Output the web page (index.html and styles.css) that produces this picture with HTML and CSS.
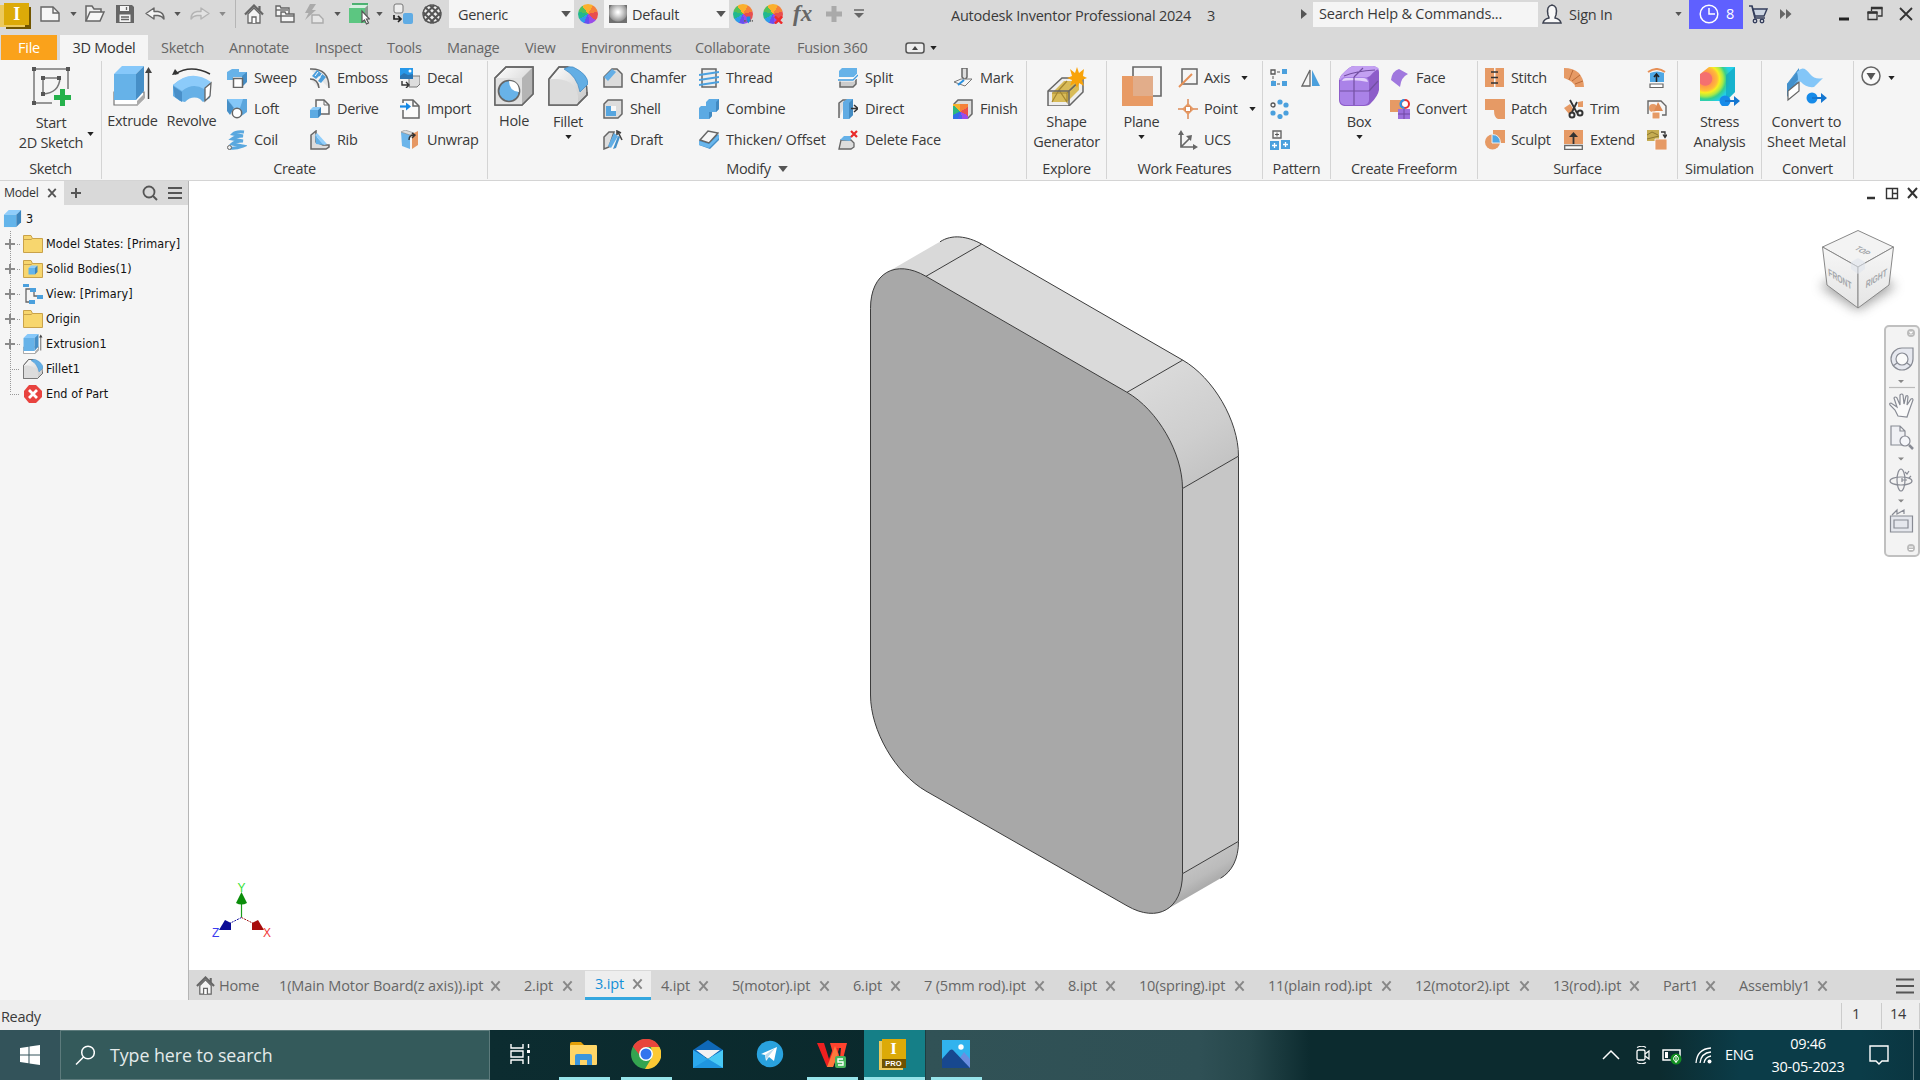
FILE: index.html
```html
<!DOCTYPE html>
<html lang="en">
<head>
<meta charset="utf-8">
<title>Autodesk Inventor Professional 2024</title>
<link rel="stylesheet" href="styles.css">
</head>
<body>
<svg class="defs" width="0" height="0">
  <defs>
    <linearGradient id="gBlue" x1="0" y1="0" x2="1" y2="1"><stop offset="0" stop-color="#74bdf0"/><stop offset="1" stop-color="#5aa5dc"/></linearGradient>
    <linearGradient id="gGrey" x1="0" y1="0" x2="1" y2="1"><stop offset="0" stop-color="#fff"/><stop offset="1" stop-color="#c4c4c4"/></linearGradient>
    <symbol id="down" viewBox="0 0 8 5"><path d="M0 0h8L4 5z"/></symbol>
    <symbol id="cross" viewBox="0 0 12 12"><path d="M1.500 1l9 10M10.500 1l-9 10" fill="none" stroke="currentColor" stroke-width="2.200"/></symbol>
    <symbol id="folder" viewBox="0 0 20 18"><path d="M.5 17.500V.5h7.500l1.500 3h10v14z" fill="#f7d66e" stroke="#c9a24a"/><path d="M.5 4.500h7.500l1.500-1" fill="none" stroke="#c9a24a"/></symbol>
    <symbol id="house" viewBox="0 0 20 20"><path d="M4 10v9h12v-9l-6-6z" fill="#f4f4f4" stroke="#666" stroke-width="1.300"/><path d="M1 10.500L10 1.500l9 9M15.500 2v5" fill="none" stroke="#666" stroke-width="2.200"/><path d="M8 19v-6h4v6" fill="#fff" stroke="#666" stroke-width="1.300"/></symbol>
    <symbol id="cube" viewBox="0 0 20 20"><path d="M1 6l5-5h13l-5 5z" fill="#8fcdfb"/><path d="M1 6h13v13H1z" fill="#63b4ea"/><path d="M14 6l5-5v13l-5 5z" fill="#3c85bd"/></symbol>
    <symbol id="extrude" viewBox="0 0 40 40"><path d="M1 33v6h23l7-7v-6H1z" fill="#fff" stroke="#777" stroke-width="1.200"/><path d="M24 35v5l7-7v-5z" fill="#aaa"/><path d="M1 8l8-8h22l-8 8z" fill="#86c8fa"/><path d="M1 8h22v26H1z" fill="#66b2e8"/><path d="M23 8l8-8v25l-8 9z" fill="#468fc7"/><path d="M35.500 33V4" stroke="#444" stroke-width="1.500"/><path d="M32 7l3.500-6L39 7z" fill="#444"/></symbol>
    <symbol id="fillet" viewBox="0 0 40 40"><path d="M1 13L11 1h9q19 5 19 25v3L29 39H1z" fill="url(#gGrey)" stroke="#666" stroke-width="1.500"/><path d="M1 13h9q18 2 20 17v9H1z" fill="#dcdcdc"/><path d="M1 13L11 1h9M39 26v3L29 39H1V13" fill="none" stroke="#666" stroke-width="1.500"/><path d="M16 3Q20 0 25 1q15 7 15 17l-8 8Q29 10 16 3z" fill="#63aee4" stroke="#3e86c0" stroke-width=".7"/></symbol>
  </defs>
</svg>

<header class="topbar">
  <span class="logo">I</span>
  <svg class="i20" viewBox="0 0 20 20"><path d="M1 3h12l6 6v8H1z" fill="#f6f6f6" stroke="#666" stroke-width="1.400"/><path d="M13 3v6h6" fill="none" stroke="#666" stroke-width="1.400"/></svg>
  <svg class="dd"><use href="#down"/></svg>
  <svg class="i20" viewBox="0 0 20 20"><path d="M1 17V2h6l2 3h7v3" fill="#eee" stroke="#666" stroke-width="1.500"/><path d="M1 17L5 8h14l-4 9z" fill="#f6f6f6" stroke="#666" stroke-width="1.500"/></svg>
  <svg class="i18" viewBox="0 0 18 18"><path d="M0 0h16l2 2v16H0z" fill="#666"/><path d="M4 1h9v5H4zM3.500 9.500h11V17h-11z" fill="#f4f4f4"/><path d="M5 12h8M5 14.500h8M10.500 2v3" stroke="#666" stroke-width="1.300"/></svg>
  <svg class="i20" viewBox="0 0 20 20"><path d="M1 9.500L9 4v3.500h4q6 1 6 7.500-2-3-6-3.500H9V15z" fill="#f3f3f3" stroke="#666" stroke-width="1.400" stroke-linejoin="round"/></svg>
  <svg class="dd"><use href="#down"/></svg>
  <svg class="i20" viewBox="0 0 20 20"><path d="M19 9.500L11 4v3.500H7q-6 1-6 7.500 2-3 6-3.500h4V15z" fill="#e2e2e2" stroke="#b4b4b4" stroke-width="1.400" stroke-linejoin="round"/></svg>
  <svg class="dd pale"><use href="#down"/></svg>
  <span class="rule"></span>
  <svg class="i20"><use href="#house"/></svg>
  <svg class="i20" viewBox="0 0 20 20"><g fill="#f5f5f5" stroke="#666" stroke-width="1.400"><path d="M1 12V2h4l1 2h8v8z"/><path d="M1 6h12" /><path d="M6 18V8h4l1 2h8v8z"/><path d="M6 12h13"/></g></svg>
  <svg class="i20" viewBox="0 0 20 20"><path d="M6 0H12L8 6h4L1 16 4.500 9H1z" fill="#aaa"/><path d="M8 11h7l4 4v4H8z" fill="#e6e6e6" stroke="#aaa" stroke-width="1.400"/></svg>
  <svg class="dd"><use href="#down"/></svg>
  <svg class="i22" viewBox="0 0 22 22"><path d="M1 5l3-4h17l-2 4z" fill="#d6efe0"/><path d="M4 1h16" stroke="#2aa557" stroke-width="1.600"/><path d="M1 5h16v15H1z" fill="#5cc681"/><path d="M17 5l3-3v12l-3 4z" fill="#8b9a90"/><path d="M14 8v11l2.500-2 2 4 2-1-2-4h3z" fill="#fff" stroke="#555" stroke-width="1.200"/></svg>
  <svg class="dd"><use href="#down"/></svg>
  <svg class="i22" viewBox="0 0 22 22"><rect x="2" y="1" width="9" height="9" rx="2" fill="#eee" stroke="#777"/><rect x="11" y="10" width="10" height="11" rx="2" fill="#60ace4"/><path d="M2 12v4h7M6 13l3 3-3 3" fill="none" stroke="#222" stroke-width="1.700"/></svg>
  <svg class="i20" viewBox="0 0 20 20"><circle cx="10" cy="10" r="9" fill="#eee" stroke="#555" stroke-width="1.500"/><path d="M3 3l14 14M7.500 1l11 11M1 8l11 11M17 3L3 17M12.500 1L1.500 12M19 8L8 19" stroke="#555" stroke-width="2"/></svg>
  <span class="combo generic"><span>Generic</span><svg class="dd big-dd"><use href="#down"/></svg></span>
  <i class="wheel"></i>
  <span class="combo"><i class="ball"></i><span>Default</span><svg class="dd big-dd"><use href="#down"/></svg></span>
  <span class="wheel-wrap"><i class="wheel"></i><svg viewBox="0 0 10 8"><path d="M0 5h10" stroke="#666" stroke-width="2" stroke-dasharray="2 1"/><path d="M3 0h4v4L5 8 3 4z" fill="#1888e8"/></svg></span>
  <span class="wheel-wrap"><i class="wheel"></i><svg viewBox="0 0 10 8"><path d="M1 0l8 8M9 0L1 8" stroke="#ee2b2b" stroke-width="2.600"/></svg></span>
  <span class="fx">fx</span>
  <svg class="i16" viewBox="0 0 16 16"><path d="M5.500 0h5v5.500H16v5h-5.500V16h-5v-5.500H0v-5h5.500z" fill="#aaa"/></svg>
  <svg class="i12" viewBox="0 0 12 12"><path d="M1 2h10" stroke="#666" stroke-width="1.500"/><path d="M1 5h10l-5 5z" fill="#666"/></svg>
  <span class="title">Autodesk Inventor Professional 2024</span>
  <span class="title">3</span>
  <svg class="play" viewBox="0 0 6 10"><path d="M0 0l6 5-6 5z" fill="#555"/></svg>
  <span class="help">Search Help &amp; Commands...</span>
  <svg class="i20" viewBox="0 0 20 20"><path d="M1 19q1-4 6-5 0-1-1-3-2-9 4-10 6 1 4 10-1 2-1 3 5 1 6 5z" fill="#f8f8f8" stroke="#3e4352" stroke-width="1.500"/></svg>
  <span class="title sign">Sign In</span>
  <svg class="dd"><use href="#down"/></svg>
  <span class="trial"><svg viewBox="0 0 20 20"><circle cx="10" cy="10" r="8.800" fill="none" stroke="#fff" stroke-width="1.500"/><path d="M10 4v6h6" fill="none" stroke="#fff" stroke-width="1.500"/></svg>8</span>
  <svg class="i20" viewBox="0 0 20 20"><path d="M1 2h3l3 12h10" fill="none" stroke="#343e5c" stroke-width="1.700"/><path d="M5 5h14l-3 7H7z" fill="#ccd5e2" stroke="#343e5c" stroke-width="1.400"/><circle cx="7" cy="17" r="1.700" fill="#fff" stroke="#343e5c" stroke-width="1.500"/><circle cx="14" cy="17" r="1.700" fill="#fff" stroke="#343e5c" stroke-width="1.500"/></svg>
  <svg class="i12" viewBox="0 0 12 12"><path d="M0 1l5.500 5L0 11zM6 1l5.500 5L6 11z" fill="#666"/></svg>
  <svg class="i16" viewBox="0 0 16 16"><path d="M0 13h10" stroke="#222" stroke-width="3"/></svg>
  <svg class="i16" viewBox="0 0 16 16"><path d="M1 6.500h9v7H1zM4.500 5V2H15v8h-4" fill="none" stroke="#333" stroke-width="1.300"/><path d="M4 2h11.500M.5 6.500h10" stroke="#333" stroke-width="2.500"/></svg>
  <svg class="i16" viewBox="0 0 16 16"><path d="M1 2l12 12M13 2L1 14" stroke="#333" stroke-width="1.800"/></svg>
</header>

<nav class="tabs">
  <span class="file">File</span><span class="on">3D Model</span><span>Sketch</span><span>Annotate</span><span>Inspect</span><span>Tools</span><span>Manage</span><span>View</span><span>Environments</span><span>Collaborate</span><span>Fusion 360</span>
  <svg class="pill" viewBox="0 0 20 12"><rect x="1" y="1" width="18" height="10" rx="2.500" fill="#eee" stroke="#555" stroke-width="1.500"/><path d="M7 8l3-4 3 4z" fill="#444"/></svg>
  <svg class="dd black"><use href="#down"/></svg>
</nav>

<section class="ribbon">
  <div class="panel p-sketch">
    <div class="tools">
      <div class="big two start"><svg viewBox="0 0 40 40"><path d="M3 3h34M3 3v34h18M37 3v20" stroke="#777" stroke-width="1.500" fill="none"/><path d="M12 12v16q16-1 17-16z" fill="none" stroke="#777" stroke-width="1.500"/><path d="M1 1h4v4H1zM35 1h4v4h-4zM1 35h4v4H1zM10 10h4v4h-4zM26 10h4v4h-4zM10 26h4v4h-4z" fill="#555"/><path d="M29 23h5v6h6v5h-6v6h-5v-6h-6v-5h6z" fill="#25b14b"/></svg><b>Start</b><b>2D Sketch</b></div>
      <svg class="dd black sk"><use href="#down"/></svg>
    </div>
    <h6>Sketch</h6>
  </div>
  <div class="panel p-create">
    <div class="tools">
      <div class="big"><svg><use href="#extrude"/></svg><b>Extrude</b></div>
      <div class="big"><svg viewBox="0 0 40 40"><path d="M1 19q18-16 38-2l-1 15-7 4-3-3q-8-4-15 3l-5-1-7-5z" fill="#66b0e6"/><path d="M1 19q18-17 38-3l-7 7q-11-7-22 2z" fill="#8ccbfa"/><path d="M1 20l9 6v10l-7-5z" fill="#498fc8"/><path d="M33 22l6-5-1 13-5 5z" fill="#fff" stroke="#666" stroke-width="1.300"/><path d="M3 8q16-10 35 0" fill="none" stroke="#333" stroke-width="1.500"/><path d="M0 9l3-6 4 5z" fill="#333"/></svg><b>Revolve</b></div>
      <div class="col">
        <span><svg viewBox="0 0 20 20"><path d="M0 4l5-3h7v3h8v8l-5 5V9H6v3H0z" fill="#67b2e8"/><path d="M15 8l5-4v10l-4 4z" fill="#448dc5"/><path d="M6.500 10.500h9v9h-9z" fill="#fff" stroke="#666" stroke-width="1.500"/></svg>Sweep</span>
        <span><svg viewBox="0 0 20 20"><path d="M0 0h20v13l-7 5L7 9z" fill="#5ba6dd"/><path d="M0 0h16l-3 9H7z" fill="#84c7f8"/><path d="M0 0v12l3 4 4-7z" fill="#468fc7"/><circle cx="10" cy="14" r="4.700" fill="#fff" stroke="#666" stroke-width="1.500"/></svg>Loft</span>
        <span><svg viewBox="0 0 20 20"><path d="M17 2Q9 1 6 4l10 2Q9 6 5 9l11 2Q8 11 5 14l11 2q-8 3-13 2" fill="none" stroke="#5aa8df" stroke-width="3"/><circle cx="2.500" cy="17.500" r="2" fill="#eee" stroke="#666"/></svg>Coil</span>
      </div>
      <div class="col">
        <span><svg viewBox="0 0 20 20"><path d="M0 1q19-1 19 19M0 11q8 0 9 9" fill="#e5e5e5" stroke="#666" stroke-width="1.500"/><path d="M2 8l5-6 9 7-5 6-3-2 3-4-2-1-3 3z" fill="#4b9edc"/><path d="M5 8l3-4M9 10l3-4" stroke="#fff"/></svg>Emboss</span>
        <span><svg viewBox="0 0 20 20"><path d="M6 8V1h8l5 5v9h-8" fill="#f8f8f8" stroke="#666" stroke-width="1.500"/><path d="M14 1v5h5" fill="none" stroke="#666"/><path d="M0 11l3-3h8l-3 3z" fill="#8ccbf8"/><path d="M0 11h8v8H0z" fill="#5caae2"/><path d="M8 11l3-3v8l-3 3z" fill="#3c85bd"/></svg>Derive</span>
        <span><svg viewBox="0 0 20 20"><path d="M1 5l5-4v11l7 3h6v2l-3 2H1z" fill="#ddd" stroke="#666" stroke-width="1.500"/><path d="M5 5l9 10-8-1z" fill="#63b1e8"/><path d="M5 5l2-2 10 11-3 1z" fill="#91cffc"/></svg>Rib</span>
      </div>
      <div class="col">
        <span><svg viewBox="0 0 20 20"><path d="M9 10l3-2h8v8l-3 3H9z" fill="#ddd" stroke="#777"/><path d="M0 0h13v11H0z" fill="#2798e9"/><path d="M0 8l4-3 4 2 5-1v5H0z" fill="#2b75b3"/><circle cx="10" cy="3" r="1.500" fill="#fff"/><path d="M2 13v4h6M6 14l3 3-3 3" fill="none" stroke="#333" stroke-width="1.400"/></svg>Decal</span>
        <span><svg viewBox="0 0 20 20"><path d="M3 4V1h10l6 6v12H3v-8" fill="#fafafa" stroke="#666" stroke-width="1.500"/><path d="M13 1v6h6" fill="none" stroke="#666" stroke-width="1.500"/><path d="M0 7.500h7" stroke="#1689e5" stroke-width="2.200"/><path d="M6 3.500l5 4-5 4z" fill="#1689e5"/></svg>Import</span>
        <span><svg viewBox="0 0 20 20"><path d="M1 2l9 2v15l-8-3z" fill="#6cb5ea"/><path d="M1 2l4-2 9 3-4 2z" fill="#ddd" stroke="#888" stroke-width=".6"/><path d="M12 4l6-3v14l-6 4z" fill="#e69864"/><path d="M9 10q0-5 5-5M12 3l3 2-3 3" fill="none" stroke="#333" stroke-width="1.400"/></svg>Unwrap</span>
      </div>
    </div>
    <h6>Create</h6>
  </div>
  <div class="panel p-modify">
    <div class="tools">
      <div class="big"><svg viewBox="0 0 40 40"><path d="M1 12L12 1h27v27L28 39H1z" fill="url(#gGrey)" stroke="#666" stroke-width="1.500"/><path d="M28 12L39 1v27L28 39z" fill="#b4b4b4"/><path d="M1 12h27v27H1z" fill="#e1e1e1"/><path d="M1 12L12 1h27v27L28 39H1z" fill="none" stroke="#666" stroke-width="1.500"/><circle cx="15" cy="25" r="10.500" fill="#68b2e8" stroke="#666" stroke-width="1.700"/><path d="M15 15q10 0 10 11-10-1-10-11z" fill="#fff"/></svg><b>Hole</b></div>
      <div class="big drop"><svg><use href="#fillet"/></svg><b>Fillet</b><svg class="dd black"><use href="#down"/></svg></div>
      <div class="col">
        <span><svg viewBox="0 0 20 20"><path d="M1 9l8-8h5l5 5v13H1z" fill="#dcdcdc" stroke="#666" stroke-width="1.500"/><path d="M1 9l8-8 4 3-8 9z" fill="#63aee6"/></svg>Chamfer</span>
        <span><svg viewBox="0 0 20 20"><path d="M1 5l4-4h14v14l-4 4H1z" fill="#ddd" stroke="#666" stroke-width="1.500"/><path d="M3 7h10v10H3z" fill="#f8f8f8"/><path d="M3 7h5v5h5v5H3z" fill="#56a5df"/></svg>Shell</span>
        <span><svg viewBox="0 0 20 20"><path d="M1 19V7l5-5h5L6 17z" fill="#ddd" stroke="#666" stroke-width="1.500"/><path d="M8 18l-3-2 6-13 4 3z" fill="#60ade5"/><path d="M15 6l-5 13 3-1 4-11z" fill="#4590c9"/><path d="M19 10L15 2M14 5V1l4 2" fill="none" stroke="#444" stroke-width="1.600"/></svg>Draft</span>
      </div>
      <div class="col">
        <span><svg viewBox="0 0 20 20"><path d="M3 1h14v18H3z" fill="#eee" stroke="#666" stroke-width="1.500"/><path d="M0 7l20-3M0 12l20-3M0 17l20-3" stroke="#4ba1e0" stroke-width="2.200"/></svg>Thread</span>
        <span><svg viewBox="0 0 20 20"><path d="M0 9l2-2h5V3l3-3h10v10l-3 3h-4v4l-3 3H0z" fill="#5caae3"/><path d="M17 3l3-3v10l-3 3zM10 13h3v4l-3 3z" fill="#4189c1"/></svg>Combine</span>
        <span><svg viewBox="0 0 20 20"><path d="M0 11l9-8 11 2v5l-9 9-11-4z" fill="#448fc8"/><path d="M1 10L9 1l10 2-9 10z" fill="#f6f6f6" stroke="#666" stroke-width="1.500"/><path d="M0 11l10 3 10-10v4L10 18 0 15z" fill="#69b6ec"/></svg>Thicken/ Offset</span>
      </div>
      <div class="col">
        <span><svg viewBox="0 0 20 20"><path d="M1 3l3-3h15v6l-3 3H1z" fill="#66b2e8"/><path d="M2 13v6h13l3-3v-5" fill="#ccc" stroke="#666" stroke-width="1.500"/><path d="M0 12h15l5-5" fill="none" stroke="#fff" stroke-width="3"/><path d="M0 12h15l5-5" fill="none" stroke="#4099dc" stroke-width="1.400"/></svg>Split</span>
        <span><svg viewBox="0 0 20 20"><path d="M1 19V4l4-3h4" fill="#ddd" stroke="#666" stroke-width="1.500"/><path d="M5 3l4-3h6v16l-4 4H5z" fill="#60abe3"/><path d="M11 4l4-4v16l-4 4z" fill="#438bc2"/><path d="M13 9.500h7M16 6l4 3.500-4 3.500" fill="none" stroke="#333" stroke-width="1.500"/></svg>Direct</span>
        <span><svg viewBox="0 0 20 20"><path d="M1 19l2-9h10l3 3v4l-3 2z" fill="#ddd" stroke="#666" stroke-width="1.300"/><path d="M2 10l4-4h8l-2 5z" fill="#65b1e8"/><path d="M13 1l6 6M19 1l-6 6" stroke="#e92a2a" stroke-width="2.200"/></svg>Delete Face</span>
      </div>
      <div class="col">
        <span><svg viewBox="0 0 20 20"><path d="M9 0h5v9l-2 3-3-3z" fill="#ddd" stroke="#666" stroke-width="1.500"/><path d="M1 14l7-3h11l-7 7z" fill="#f5f5f5" stroke="#777"/><path d="M5 17l6-5" stroke="#2a90e0" stroke-width="2"/></svg>Mark</span>
        <span class="finish"><svg viewBox="0 0 20 20"><path d="M1 5l4-4h14v14l-4 4H1z" fill="#ddd" stroke="#666" stroke-width="1.500"/></svg><i></i>Finish</span>
      </div>
    </div>
    <h6>Modify <svg class="dd big-dd"><use href="#down"/></svg></h6>
  </div>
  <div class="panel p-explore">
    <div class="tools"><div class="big two"><svg viewBox="0 0 40 40"><path d="M1 25L15 12h21v14L22 40H1z" fill="#eee" stroke="#666" stroke-width="1.500"/><path d="M5 27l12-12h15v9L20 36H5z" fill="#d8bb58"/><path d="M5 36l7-12 8 12V27H5M20 27l12-12M12 24l8-9" fill="none" stroke="#a48730" stroke-width="1.200"/><path d="M1 25h21v15M22 25l14-13" fill="none" stroke="#666" stroke-width="1.500"/><path d="M30 1l2 6 5-4-1 7 4 2-5 2 2 6-5-3-2 5-2-5-5 3 2-6-5-2 5-2-2-7 5 4z" fill="#f8a30a"/></svg><b>Shape</b><b>Generator</b></div></div>
    <h6>Explore</h6>
  </div>
  <div class="panel p-work">
    <div class="tools">
      <div class="big drop"><svg viewBox="0 0 40 40"><path d="M11 1h28v29H11z" fill="#f5f5f5" stroke="#666" stroke-width="1.600"/><path d="M0 10h31v30H0z" fill="#e89a64"/><path d="M11 10h20v20H11z" fill="#e2ad8a"/></svg><b>Plane</b><svg class="dd black"><use href="#down"/></svg></div>
      <div class="col">
        <span><svg viewBox="0 0 20 20"><path d="M4 1h15v15H4z" fill="none" stroke="#666" stroke-width="1.500"/><path d="M1 19L14 6" stroke="#e69057" stroke-width="2"/></svg>Axis<svg class="dd black"><use href="#down"/></svg></span>
        <span><svg viewBox="0 0 20 20"><path d="M0 10h20M10 0v20" stroke="#dc8b57" stroke-width="1.500"/><path d="M10 4l6 6-6 6-6-6z" fill="#e69a65"/><path d="M7.500 7.500h5v5h-5z" fill="#fff" stroke="#dc8b57"/></svg>Point<svg class="dd black"><use href="#down"/></svg></span>
        <span><svg viewBox="0 0 20 20"><path d="M3 4v13h13M4 16l8-8" fill="none" stroke="#666" stroke-width="1.700"/><path d="M0 5l3-5 3 5zM15 14l5 3-5 3zM8 6l6-1-1 6z" fill="#666"/></svg>UCS</span>
      </div>
    </div>
    <h6>Work Features</h6>
  </div>
  <div class="panel p-pattern">
    <div class="tools">
      <div class="col">
        <span><svg viewBox="0 0 20 20"><path d="M1 2h4v4H1z" fill="none" stroke="#555" stroke-width="1.300"/><path d="M7 4h4M3 8v5M7 16h4" stroke="#555" stroke-dasharray="3 1.500"/><path d="M12 1h5v5h-5zM1 13h5v5H1zM12 13h5v5h-5z" fill="#4ba0dd"/></svg></span>
        <span><svg viewBox="0 0 20 20"><circle cx="3" cy="6" r="2" fill="none" stroke="#555" stroke-width="1.300"/><g fill="#4ba0dd"><circle cx="10" cy="3" r="2.600"/><circle cx="16" cy="6" r="2.600"/><circle cx="3" cy="14" r="2.600"/><circle cx="16" cy="14" r="2.600"/><circle cx="10" cy="17.500" r="2.600"/></g></svg></span>
        <span><svg viewBox="0 0 20 20"><path d="M3 1h8v7H3z" fill="none" stroke="#666" stroke-width="1.400"/><path d="M7 2.500v4M5 4.500h4" stroke="#555"/><path d="M0 11h9v9H0zM11 10h9v9h-9z" fill="#4ba0dd"/><path d="M4.500 13v5M2 15.500h5M15.500 12v5M13 14.500h5" stroke="#fff" stroke-width="1.300"/></svg></span>
      </div>
      <div class="col"><span><svg viewBox="0 0 20 20"><path d="M9 2v16H1z" fill="none" stroke="#666" stroke-width="1.300"/><path d="M11 2v16h8z" fill="#4ba0dd"/></svg></span></div>
    </div>
    <h6>Pattern</h6>
  </div>
  <div class="panel p-free">
    <div class="tools">
      <div class="big drop"><svg viewBox="0 0 40 40"><path d="M0 14Q1 9 10 2q2-2 6-2h18q6 1 6 6v18q-1 6-8 13-2 3-7 3H5q-5-1-5-6z" fill="#8d5dc9"/><path d="M0 14Q1 9 10 2q2-2 6-2h18q5 1 6 3-4 1-9 7-3 2-6 2z" fill="#c3a0f2"/><rect x="1" y="11" width="29" height="28" rx="5" fill="#aa82e8"/><path d="M3 15q1-3 4-3h17q4 0 5 4-13-3-26-1z" fill="#e3d2fa"/><path d="M15 11v28M1 25h29M15 11l9-9M30 25l9-10M5 10q12-5 31-6" stroke="#7350a2" stroke-width="1.200" fill="none"/></svg><b>Box</b><svg class="dd black"><use href="#down"/></svg></div>
      <div class="col">
        <span><svg viewBox="0 0 20 20"><path d="M1 12Q2 3 9 1l9 5q-7 3-8 13z" fill="#a078de"/></svg>Face</span>
        <span><svg viewBox="0 0 20 20"><path d="M0 1h13v12H0z" fill="#e69a65"/><circle cx="15" cy="5" r="4" fill="#fff" stroke="#e93030" stroke-width="2"/><path d="M14.500 9a4 4 0 0 1 0-8" fill="none" stroke="#2995e8" stroke-width="2.200"/><path d="M8 10h12v10H8z" fill="#9d70dd"/><path d="M14 10v10M8 15h12" stroke="#6f49a3"/></svg>Convert</span>
      </div>
    </div>
    <h6>Create Freeform</h6>
  </div>
  <div class="panel p-surface">
    <div class="tools">
      <div class="col">
        <span><svg viewBox="0 0 20 20"><path d="M0 0h9v19H0zM10.500 0H19v19h-8.500z" fill="#e69a65"/><path d="M6 4h7M6 9.500h7M6 15h7" stroke="#333" stroke-width="1.400"/></svg>Stitch</span>
        <span><svg viewBox="0 0 20 20"><path d="M0 0h20v20h-7q-4-1-4-9H0z" fill="#e69a65"/></svg>Patch</span>
        <span><svg viewBox="0 0 20 20"><path d="M8 0h12v13h-9L8 8z" fill="#e69a65"/><circle cx="7.500" cy="12" r="7.500" fill="#e69a65"/><path d="M7 4.500q8 0 8.500 8.500H7z" fill="#4fa6e5" stroke="#eee"/></svg>Sculpt</span>
      </div>
      <div class="col">
        <span><svg viewBox="0 0 20 20"><path d="M0 0q19 0 20 19h-9q0-5-11-9z" fill="#e69a65"/><path d="M5 12l4-10M8 13l8-6M11 16l8-3" stroke="#b96b39"/></svg></span>
        <span><svg viewBox="0 0 20 20"><path d="M0 9l6-4 4 6-5 4zM14 3l5-1v6h-5z" fill="#e69a65"/><path d="M6 1l7 13M13 3L8 13" stroke="#333" stroke-width="1.800"/><circle cx="8" cy="16" r="2.500" fill="none" stroke="#333" stroke-width="2"/><circle cx="16" cy="14" r="2.500" fill="none" stroke="#333" stroke-width="2"/></svg>Trim</span>
        <span><svg viewBox="0 0 20 20"><path d="M0 0h19v14H0z" fill="#e69a65"/><path d="M.7 15.500h17.600v4H.7z" fill="#fff" stroke="#666" stroke-width="1.300"/><path d="M9.500 14V5" stroke="#333" stroke-width="1.800"/><path d="M5 7l4.500-5L14 7z" fill="#333"/></svg>Extend</span>
      </div>
      <div class="col">
        <span><svg viewBox="0 0 20 20"><path d="M1 4Q10-2 18 4" fill="none" stroke="#e69057" stroke-width="2"/><path d="M3 5q7-3 14 0v9H3z" fill="#4ea7e4"/><path d="M3 16h13v3.500H3z" fill="#fff" stroke="#666" stroke-width="1.200"/><path d="M9.500 14V7M7 9l2.500-3L12 9" fill="none" stroke="#222" stroke-width="1.600"/></svg></span>
        <span><svg viewBox="0 0 20 20"><path d="M1 15V2h13l5 5v9h-4" fill="none" stroke="#666" stroke-width="1.400"/><circle cx="6" cy="9" r="4" fill="#e69a65"/><path d="M11 3l5 9H7z" fill="#dd8952"/><path d="M5 13h8v7H5z" fill="#e69a65" stroke="#fff"/></svg></span>
        <span><svg viewBox="0 0 20 20"><path d="M0 0h12v11H0z" fill="#c6ad52"/><path d="M0 5l5-3 6 3M0 9l12-3" fill="none" stroke="#8d7830"/><path d="M8 9h12v11H8z" fill="#e69a65" stroke="#fff" stroke-width=".8"/><path d="M14 2h4v5M16 4.500l2 3 2-3" fill="none" stroke="#333" stroke-width="1.300"/></svg></span>
      </div>
    </div>
    <h6>Surface</h6>
  </div>
  <div class="panel p-sim">
    <div class="tools"><div class="big two"><svg viewBox="0 0 40 40"><defs><radialGradient id="stress" cx=".15" cy=".35" r=".85"><stop offset=".22" stop-color="#f47070"/><stop offset=".25" stop-color="#ff9a49"/><stop offset=".4" stop-color="#ffbb3a"/><stop offset=".48" stop-color="#f8ef20"/><stop offset=".6" stop-color="#a6e94a"/><stop offset=".7" stop-color="#35cf8e"/><stop offset=".85" stop-color="#23cfe8"/></radialGradient></defs><path d="M0 8L9 1h26v25l-9 9H0z" fill="url(#stress)"/><path d="M26 9l9-8v25l-9 9z" fill="#0e9fbb" opacity=".6"/><circle cx="25" cy="35" r="5.500" fill="#168be9"/><path d="M25 34h9v-4l6 5-6 5v-4h-9z" fill="#1476d0"/></svg><b>Stress</b><b>Analysis</b></div></div>
    <h6>Simulation</h6>
  </div>
  <div class="panel p-convert">
    <div class="tools"><div class="big two"><svg viewBox="0 0 40 40"><path d="M0 18L12 2v13L0 31z" fill="#4390cb"/><path d="M1 25l11-9v9L1 34z" fill="#fff" stroke="#666" stroke-width="1.200"/><path d="M0 18L10 6q6-8 13 2 5 6 13 4l-9 9q-8 1-13-5-3-2-7 2z" fill="#83c6f8"/><path d="M0 18L10 6q1 4 1 8L0 25z" fill="#4390cb"/><circle cx="25" cy="32" r="5.500" fill="#168be9"/><path d="M25 31h9v-4l6 5-6 5v-4h-9z" fill="#1476d0"/></svg><b>Convert to</b><b>Sheet Metal</b></div></div>
    <h6>Convert</h6>
  </div>
  <div class="ribbon-end"><svg viewBox="0 0 20 20"><circle cx="10" cy="10" r="9" fill="#fafafa" stroke="#666" stroke-width="1.500"/><path d="M5.500 7h9L10 14z" fill="#555"/></svg><svg class="dd black"><use href="#down"/></svg></div>
</section>

<main>
  <aside>
    <div class="side-tabs">
      <span class="model">Model<svg><use href="#cross"/></svg></span>
      <svg viewBox="0 0 12 12"><path d="M6 1v10M1 6h10" stroke="#555" stroke-width="2"/></svg>
      <svg class="find" viewBox="0 0 16 16"><circle cx="7" cy="7" r="5.500" fill="none" stroke="#555" stroke-width="1.800"/><path d="M11 11l4 4" stroke="#555" stroke-width="2"/></svg>
      <svg class="burger" viewBox="0 0 14 14"><path d="M0 2h14M0 7h14M0 12h14" stroke="#555" stroke-width="1.800"/></svg>
    </div>
    <div class="root"><svg><use href="#cube"/></svg>3</div>
    <ul class="tree">
      <li class="plus"><svg><use href="#folder"/></svg>Model States: [Primary]</li>
      <li class="plus"><svg viewBox="0 0 20 18"><use href="#folder"/><use href="#cube" x="5" y="5" width="10" height="10"/></svg>Solid Bodies(1)</li>
      <li class="plus"><svg viewBox="0 0 20 20"><path d="M7 5H3v13h3M11 8v4h4" fill="none" stroke="#666" stroke-width="1.300" /><path d="M0 0h6v3H0zM7 4h6v4H7zM14 11h6v4h-6zM6 16h6v4H6z" fill="#4ba0dd"/></svg>View: [Primary]</li>
      <li class="plus"><svg><use href="#folder"/></svg>Origin</li>
      <li class="plus"><svg><use href="#extrude"/></svg>Extrusion1</li>
      <li><svg><use href="#fillet"/></svg>Fillet1</li>
      <li><svg viewBox="0 0 20 20"><path d="M6 1h7l6 6v6l-6 6H6l-5-6V7z" fill="#e8433f"/><path d="M6 6l8 8M14 6l-8 8" stroke="#fff" stroke-width="2.800"/></svg>End of Part</li>
    </ul>
  </aside>
  <div class="work">
    <div class="canvas">
      <svg class="scene" viewBox="189 181 1731 789">
        <defs>
          <linearGradient id="gTR" gradientUnits="userSpaceOnUse" x1="1150" y1="375" x2="1215" y2="480"><stop offset="0" stop-color="#dadada"/><stop offset=".6" stop-color="#cecece"/><stop offset="1" stop-color="#c2c2c2"/></linearGradient>
          <linearGradient id="gBR" gradientUnits="userSpaceOnUse" x1="1195" y1="860" x2="1212" y2="890"><stop offset="0" stop-color="#c4c4c4"/><stop offset=".5" stop-color="#bbb"/><stop offset="1" stop-color="#a2a2a2"/></linearGradient>
          <filter id="soft" x="-50%" y="-50%" width="200%" height="200%"><feGaussianBlur stdDeviation="6"/></filter>
          <linearGradient id="gFace" x1="0" y1="0" x2="0" y2="1"><stop offset="0" stop-color="#f6f6f6"/><stop offset="1" stop-color="#e5e5e5"/></linearGradient>
        </defs>
        <path d="M886.800 272.400L942.500 240.200C953 234 967 236 981.700 244.100L926 276.300z" fill="#d9d9d9"/>
        <path d="M926 276.300L981.700 244.100 1182.700 360.100 1127 392.300z" fill="#dadada"/>
        <path d="M1127 392.300L1182.700 360.100C1213.400 377.800 1238.200 420.900 1238.200 456.300L1182.500 488.500C1182.500 453.100 1157.700 410 1127 392.300z" fill="url(#gTR)"/>
        <path d="M1182.500 488.500L1238.200 456.300V841.500L1182.500 873.700z" fill="#c6c6c6"/>
        <path d="M1182.500 873.700L1238.200 841.500C1238.200 859 1232 871.500 1221.900 877.500L1166.200 909.700z" fill="url(#gBR)"/>
        <path d="M870.500 308.400C870.500 273 895.350 258.600 926 276.300L1127 392.300C1157.700 410 1182.500 453.100 1182.500 488.500V873.700C1182.500 909.100 1157.650 923.500 1127 905.800L926 791.100C895.350 773.400 870.500 730.400 870.500 695z" fill="#a8a8a8" stroke="#3c3c3c"/>
        <path d="M940 241.800C952 234 967 236 981.700 244.100L1182.700 360.100C1213.400 377.800 1238.500 420.900 1238.500 456.300V841.500C1238.500 859 1232 871.500 1220.500 878.300M926 276.300L981.700 244.100M1127 392.300L1182.700 360.100M1182.500 488.500L1238.200 456.300M1182.500 873.700L1238.200 841.500" fill="none" stroke="#3c3c3c"/>

        <g>
          <path d="M241.500 917v-22" stroke="#1a9c1a" stroke-width="1.200"/><path d="M241.500 892l5.500 11q-5.500 3-11 0z" fill="#0a8d0a"/>
          <path d="M241.500 917.500l-14 7" stroke="#1414a0" stroke-dasharray="2 1"/><path d="M219 930l6-10 6 3v7z" fill="#0b0b96"/>
          <path d="M241.500 917.500l14 7" stroke="#a01414" stroke-dasharray="2 1"/><path d="M264 930l-6-10-6 3v7z" fill="#a80c0c"/>
          <text x="237.500" y="892" class="axis" fill="#36e236">Y</text><text x="212" y="937" class="axis" fill="#3b3bef">Z</text><text x="263" y="937" class="axis" fill="#f23a3a">X</text>
        </g>
        <path d="M1820 286l38-20 38 20-38 24z" fill="#777" opacity=".7" filter="url(#soft)"/>
        <g stroke="#888" stroke-width="1" stroke-linejoin="round">
          <path d="M1858 230.500l35.500 16.500-35.500 20-35.500-20z" fill="#f3f3f3"/>
          <path d="M1822.500 247l35.500 20v41l-31-23z" fill="url(#gFace)"/>
          <path d="M1893.500 247l-35.500 20v41l31-23z" fill="url(#gFace)"/>
        </g>
        <path d="M1851 262l7-4 7 4v7l-7 5-7-5z" fill="#dfe5ec" opacity=".6"/>
        <text class="cube-t" transform="matrix(.6 .32 -.75 .45 1854 249)">TOP</text>
        <text class="cube-t" transform="matrix(.68 .42 .08 1.050 1828.500 275.500)">FRONT</text>
        <text class="cube-t" transform="matrix(.68 -.42 -.08 1.050 1865.500 288.500)">RIGHT</text>
      </svg>
      <svg class="win" viewBox="0 0 52 14"><path d="M0 12h8" stroke="#333" stroke-width="2.500"/><path d="M19.500 2.500h11v10h-11zM25.500 2v10M25.500 7.500h5" fill="none" stroke="#333" stroke-width="1.400"/><path d="M41 2l9 10M50 2l-9 10" stroke="#333" stroke-width="2"/></svg>
      <div class="navbar">
        <svg viewBox="0 0 34 231" fill="none" stroke="#888b94" stroke-width="1.200">
          <circle cx="26" cy="8" r="4" fill="#bbb" stroke="none"/><path d="M24.500 6.500l3 3M27.500 6.500l-3 3" stroke="#fff"/>
          <path d="M17 23h11v11a11 11 0 1 1-11-11z" fill="#e6e8ef"/><circle cx="17" cy="34" r="6" fill="#fafafa"/><path d="M8 41l4-3M26 41l-4-3"/>
          <path d="M13 55h6l-3 3zM13 132.500h6l-3 3zM13 174.500h6l-3 3z" fill="#888" stroke="none"/>
          <path d="M4 62.500h26" stroke="#bbb"/>
          <path d="M13 91l-3-6-5-5q-1-2 1-2l6 4-3-9q1-2 3 0l3 7V70q2-2 3 0l1 9 2-8q2-1 2 1l-1 8 4-6q2-1 2 1l-4 11-2 6z" fill="#fafafa"/>
          <path d="M6 101h9l5 5v14H6zM15 101v5h5" fill="#eff0f4"/><circle cx="20" cy="116" r="5" fill="#f5f6fa"/><path d="M24 120l4 4" stroke-width="2.500"/>
          <ellipse cx="16" cy="155" rx="4" ry="11"/><ellipse cx="16" cy="156" rx="11" ry="4"/><path d="M17 155h5M20 147l2 2 2-3M24 153l2-2M17 153v4"/>
          <path d="M5.500 191h22v16h-22zM9 195h14v8H9z" fill="#e5e7ed"/><path d="M7 190l5-5v4l7-4v4"/>
          <circle cx="26" cy="223" r="4" fill="#bbb" stroke="none"/><path d="M24 222h4M24 224.500h4" stroke="#fff"/>
        </svg>
      </div>
    </div>
    <nav class="docs">
      <svg class="home"><use href="#house"/></svg><span>Home</span>
      <span class="doc wide">1(Main Motor Board(z axis)).ipt<svg><use href="#cross"/></svg></span>
      <span class="doc pre">2.ipt<svg><use href="#cross"/></svg></span>
      <span class="doc cur">3.ipt<svg><use href="#cross"/></svg></span>
      <span class="doc">4.ipt<svg><use href="#cross"/></svg></span>
      <span class="doc">5(motor).ipt<svg><use href="#cross"/></svg></span>
      <span class="doc">6.ipt<svg><use href="#cross"/></svg></span>
      <span class="doc">7 (5mm rod).ipt<svg><use href="#cross"/></svg></span>
      <span class="doc">8.ipt<svg><use href="#cross"/></svg></span>
      <span class="doc">10(spring).ipt<svg><use href="#cross"/></svg></span>
      <span class="doc">11(plain rod).ipt<svg><use href="#cross"/></svg></span>
      <span class="doc">12(motor2).ipt<svg><use href="#cross"/></svg></span>
      <span class="doc">13(rod).ipt<svg><use href="#cross"/></svg></span>
      <span class="doc">Part1<svg><use href="#cross"/></svg></span>
      <span class="doc last">Assembly1<svg><use href="#cross"/></svg></span>
      <svg class="lines" viewBox="0 0 18 18"><path d="M0 2.500h18M0 9h18M0 15.500h18" stroke="#555" stroke-width="2.200"/></svg>
    </nav>
  </div>
</main>

<div class="status"><span>Ready</span><b>1</b><b>14</b></div>

<footer class="taskbar">
  <span class="winkey"><svg viewBox="0 0 20 20"><path d="M0 3l8.500-1.200v7.700H0zM9.500 1.600L20 0v9.500H9.500zM0 10.500h8.500v7.700L0 17zM9.500 10.500H20V20L9.500 18.400z" fill="#fff"/></svg></span>
  <span class="search"><svg viewBox="0 0 20 20"><circle cx="13" cy="7.500" r="6.300" fill="none" stroke="#fff" stroke-width="1.500"/><path d="M8.500 12L1 19.500" stroke="#fff" stroke-width="1.500"/></svg>Type here to search</span>
  <span class="app tv"><svg viewBox="0 0 20 20"><path d="M1 0v4h12V0M1 20v-4h12v4M1 7h12v6H1z" fill="none" stroke="#fff" stroke-width="1.400"/><path d="M18.500 0v4M18.500 12v8" stroke="#fff" stroke-width="1.400"/><path d="M17 6h3v3h-3z" fill="#fff"/></svg></span>
  <span class="app run"><svg viewBox="0 0 30 30"><path d="M1 5q0-2 2-2h9l3 3v3H1z" fill="#e3a008"/><rect x="1" y="6" width="27" height="20" rx="1" fill="#ffd667"/><path d="M6 26V17q0-2 2-2h13q2 0 2 2v9h-5v-5h-7v5z" fill="#3b96dd"/></svg></span>
  <span class="app run"><svg viewBox="0 0 30 30"><circle cx="15" cy="15" r="15" fill="#34a450"/><path d="M2 7.500A15 15 0 0 1 28.500 8H15l-6.500 8z" fill="#e8453c"/><path d="M28.500 8A15 15 0 0 1 14 30l7.500-12.500L20 8z" fill="#fcc934"/><circle cx="15" cy="15" r="7" fill="#fff"/><circle cx="15" cy="15" r="5.500" fill="#3174ee"/></svg></span>
  <span class="app"><svg viewBox="0 0 30 30"><path d="M0 11L15 1l15 10v7H0z" fill="#0f68b8"/><path d="M3 11h24l-12 9z" fill="#f2f2f2"/><path d="M0 11l15 9 15-9v18H0z" fill="#2ba8ec"/><path d="M15 20l15-9v18z" fill="#48c9f5"/><path d="M0 29l15-9 15 9z" fill="#1f96e0"/></svg></span>
  <span class="app"><svg viewBox="0 0 30 30"><circle cx="15" cy="15" r="13.200" fill="#29a2de"/><path d="M6 15l16-7-3 14-5-4-3 4-1-6z" fill="#fff"/><path d="M10 16l10-7-7 9-1 3z" fill="#b8d9ec"/></svg></span>
  <span class="app run"><svg viewBox="0 0 30 30"><path d="M0 4h7l5 16 6-16h6L16 28h-6z" fill="#ee2020"/><path d="M13 4h5l5 15 1-10h-5l-2-5h13l-6 24h-4z" fill="#ff432e"/><path d="M10 28l8-21 3 8-5 13z" fill="#ff793c"/><rect x="18" y="17" width="11" height="12" rx="2" fill="#47b55c"/><path d="M26 20h-5v3h5v3h-5" fill="none" stroke="#fff" stroke-width="1.400"/></svg></span>
  <span class="app run sel"><span class="inv"><b>I</b><small>PRO</small></span></span>
  <span class="app run"><svg viewBox="0 0 30 30"><path d="M1 1h28v28H1z" fill="#31b3ee"/><path d="M17 22l6-9 6 7v9H17z" fill="#6b8fe0"/><path d="M1 20l8-9q2-1 3 0l17 18H1z" fill="#17488f"/><circle cx="20" cy="8" r="2.700" fill="#fff"/></svg></span>
  <div class="tray">
    <svg class="i18" viewBox="0 0 18 18"><path d="M1 13l8-8 8 8" fill="none" stroke="#fff" stroke-width="1.500"/></svg>
    <svg class="i18" viewBox="0 0 18 18"><rect x="2" y="4" width="8" height="10" rx="1.500" fill="none" stroke="#fff" stroke-width="1.300"/><path d="M10 8l4-3v8l-4-3M2 1.500Q7-1 11 1.500M2 16.500q5 2.500 9 0" fill="none" stroke="#fff" stroke-width="1.200"/></svg>
    <svg class="i20" viewBox="0 0 20 20"><path d="M1 5h17v10H1z" fill="none" stroke="#fff" stroke-width="1.500"/><path d="M3 7h3v6H3z" fill="#fff"/><circle cx="14" cy="14" r="5.500" fill="#129022"/><path d="M14 10q5 4 0 7-5-3 0-7v8" fill="none" stroke="#fff"/></svg>
    <svg class="i18" viewBox="0 0 18 18"><path d="M1 17Q2 3 16 2M5 17Q6 7 16 6M9 17q1-6 7-7" fill="none" stroke="#fff" stroke-width="1.300"/><circle cx="14.500" cy="15.500" r="2" fill="#fff"/></svg>
    <span>ENG</span>
    <span class="clock">09:46<br>30-05-2023</span>
    <svg class="i20" viewBox="0 0 20 20"><path d="M1 1h18v15h-6l-3 3-3-3H1z" fill="none" stroke="#fff" stroke-width="1.400"/></svg>
    <i class="peek"></i>
  </div>
</footer>
</body>
</html>
```
FILE: styles.css
```css
* { box-sizing: border-box; }
body {
  margin: 0; width: 1920px; height: 1080px; overflow: hidden;
  display: flex; flex-direction: column;
  font: 14.500px/20px "Open Sans", "Noto Sans", sans-serif;
  letter-spacing: -0.33px; color: #3a3a3a; background: #f5f5f5; white-space: nowrap;
}
svg { display: block; flex: none; }
.defs { position: absolute; }
i { display: block; }

.dd { width: 7px; height: 4px; fill: #555; }
.dd.pale { fill: #8a8a8a; }
.dd.black { fill: #222; }
.dd.big-dd { width: 10px; height: 6px; fill: #555; }
.i12 { width: 12px; height: 12px; }
.i16 { width: 16px; height: 16px; }
.i18 { width: 18px; height: 18px; }
.i20 { width: 20px; height: 20px; }
.i22 { width: 22px; height: 22px; }

/* title bar */
.topbar {
  flex: none; height: 35px; padding-bottom: 7px; background: #d9d9d9;
  display: grid; align-items: center; justify-items: start;
  grid-template-rows: 28px;
  grid-template-columns: 40px 30px 15px 31px 29px 29px 16px 29px 16px 9px 31px 29px 30px 14px 28px 16px 30px 27px 129px 26px 129px 30px 30px 33px 27px 98px 256px 94px 12px 229px 27px 106px 14px 59px 32px 59px 28px 32px 21px;
}
.logo {
  width: 25px; height: 22px; margin: 0 0 0 4px; background: #dcaa08;
  box-shadow: -4px 2px 0 #ecc95d, 2px 4px 0 #725600;
  color: #fff; font: bold 18px/22px "Liberation Serif", serif; text-align: center;
}
.rule { width: 1px; height: 28px; background: #b5b5b5; }
.combo { width: 125px; height: 28px; background: #f5f5f5; display: flex; align-items: center; padding: 0 3px 0 5px; gap: 5px; }
.combo > span { padding-top: 1px; }
.combo.generic { padding-left: 9px; }
.combo .dd { margin-left: auto; }
.ball { width: 18px; height: 18px; background: radial-gradient(circle at 50% 40%, #fff 5%, #ccc 35%, #999 62%, #707070 70%); }
.wheel { width: 20px; height: 20px; border-radius: 50%; background: conic-gradient(#fbb02d 30deg, #f5813a 30deg 75deg, #e94e4e 75deg 130deg, #9a4be8 130deg 170deg, #6750f0 170deg 205deg, #2e9be8 205deg 240deg, #22b88e 240deg 285deg, #52c05a 285deg 325deg, #fbb02d 325deg); }
.wheel-wrap { display: grid; width: 20px; height: 20px; }
.wheel-wrap > * { grid-area: 1 / 1; }
.wheel-wrap svg { width: 9px; height: 8px; align-self: end; justify-self: end; }
.fx { font: italic bold 23px/24px "Liberation Serif", serif; color: #666; letter-spacing: 0; }
.title { padding-top: 3px; letter-spacing: -0.23px; }
.title.sign { padding-top: 2px; }
.play { width: 6px; height: 10px; }
.help { width: 225px; height: 25px; padding: 2px 6px; background: #f5f5f5; letter-spacing: -0.2px; }
.trial { width: 54px; height: 29px; background: #5f60ff; color: #fff; display: flex; align-items: center; gap: 7px; padding-left: 10px; }
.trial svg { width: 20px; height: 20px; }

/* ribbon tabs */
.tabs {
  flex: none; height: 25px; background: #d9d9d9; color: #666; padding-left: 1px; line-height: 25px; letter-spacing: -0.28px;
  display: grid; align-items: center;
  grid-template-columns: 59px 101px 68px 86px 72px 60px 78px 56px 114px 102px 108px 25px 8px;
}
.tabs .file { width: 56px; background: #faa21b; color: #fff; text-align: center; }
.tabs .on { width: 88px; background: #f5f5f5; color: #333; text-align: center; }
.pill { width: 20px; height: 12px; }

/* ribbon */
.ribbon { flex: none; height: 121px; display: flex; background: #f5f5f5; border-bottom: 1px solid #d4d4d4; padding-top: 1px; }
.panel { border-right: 1px solid #d4d4d4; height: 118px; }
.tools { display: flex; height: 96px; padding-top: 5px; }
.panel h6 { margin: 0; height: 24px; font: inherit; line-height: 24px; display: flex; justify-content: center; align-items: center; gap: 7px; }
.big { display: flex; flex-direction: column; align-items: center; width: 59px; }
.big > svg:first-child { width: 40px; height: 40px; }
.big b { font-weight: normal; margin-top: 5px; }
.big.two b, .big.drop b { margin-top: 6px; }
.big.two b + b { margin-top: 0; }
.big .dd { margin-top: 3px; }
.start b:nth-of-type(1) { margin-top: 7px; }
.col { display: flex; flex-direction: column; gap: 11px; padding-top: 2px; }
.col span { display: flex; align-items: center; gap: 7px; height: 20px; line-height: 22px; }
.col span > svg:first-child { width: 20px; height: 20px; }
.p-sketch { width: 102px; }
.p-sketch .big { width: 82px; margin-left: 10px; }
.sk { margin-top: 66px; margin-left: -5px; }
.p-create { width: 386px; }
.p-create .tools { padding-left: 1px; }
.p-create .col:nth-child(3) { margin-left: 6px; width: 83px; }
.p-create .col:nth-child(4) { width: 90px; }
.p-modify { width: 539px; }
.p-modify .big:nth-child(1) { width: 52px; }
.p-modify .big:nth-child(2) { width: 56px; }
.p-modify .col:nth-child(3) { margin-left: 7px; width: 96px; }
.p-modify .col:nth-child(4) { width: 139px; letter-spacing: -0.18px; }
.p-modify .col:nth-child(5) { width: 115px; letter-spacing: -0.2px; }
.finish i { width: 15px; height: 15px; margin: 4px 5px 0 -27px; background: conic-gradient(#f5813a 60deg, #e94e4e 60deg 120deg, #9a4be8 120deg 165deg, #4b60f0 165deg 200deg, #3070e8 200deg 245deg, #2cb880 245deg 310deg, #f5b02d 310deg); }
.p-explore { width: 80px; }
.p-explore .big { width: 79px; }
.p-work { width: 156px; }
.p-work .big { width: 69px; }
.p-work .col { margin-left: 2px; }
.p-work .col .dd { margin-left: 5px; }
.p-pattern { width: 68px; }
.p-pattern .col { width: 30px; margin-left: 7px; }
.p-pattern .col + .col { margin-left: 1px; }
.p-free { width: 147px; }
.p-free .big { width: 56px; }
.p-free .col { margin-left: 3px; }
.p-free .col span, .p-surface .col span, .p-work .col span { gap: 6px; }
.p-surface { width: 200px; }
.p-surface .col { width: 84px; }
.p-surface .col:nth-child(1) { margin-left: 7px; width: 79px; }
.p-surface .col:nth-child(3) { width: 22px; margin-left: -1px; }
.p-sim { width: 84px; }
.p-sim .big { width: 83px; }
.p-convert { width: 92px; }
.p-convert .big { width: 91px; letter-spacing: -0.1px; }
.p-convert .big { margin-left: -1px; }
.ribbon-end { display: flex; gap: 7px; padding: 5px 0 0 7px; }
.ribbon-end svg:first-child { width: 20px; height: 20px; }
.ribbon-end .dd { margin-top: 10px; }

/* model browser */
main { flex: none; height: 819px; display: flex; }
aside { width: 189px; border-right: 1px solid #b5b5b5; background: #f5f5f5; color: #111; }
.side-tabs { height: 24px; background: #d9d9d9; display: flex; align-items: center; font-size: 12.300px; letter-spacing: -0.3px; margin-bottom: 1px; }
.model { width: 64px; height: 24px; background: #f5f5f5; display: flex; align-items: center; justify-content: space-between; padding: 0 7px 0 4px; margin-right: 6px; color: #333; line-height: 24px; }
.side-tabs svg { width: 12px; height: 12px; color: #555; }
.model svg { width: 10px; height: 10px; }
.side-tabs .find { width: 16px; height: 16px; margin-left: 60px; }
.side-tabs .burger { width: 14px; height: 14px; margin-left: 10px; }
.root, .tree { font: 12.500px/25px "DejaVu Sans Condensed", "DejaVu Sans", sans-serif; font-stretch: condensed; letter-spacing: 0.07px; }
.root { display: flex; align-items: center; height: 25px; gap: 4px; padding-left: 3px; }
.root svg { width: 19px; height: 19px; }
.tree {
  list-style: none; margin: 0 0 0 10px; padding: 0;
  background: repeating-linear-gradient(#999 0 1px, transparent 1px 2px) 0 0 / 1px 162px no-repeat;
}
.tree li { display: flex; align-items: center; height: 25px; gap: 3px; }
.tree li::before {
  content: ""; width: 10px; height: 10px;
  background: repeating-linear-gradient(90deg, #999 0 1px, transparent 1px 2px) 0 5px / 10px 1px no-repeat;
}
.tree li.plus::before {
  margin-left: -5px; width: 15px;
  background:
    linear-gradient(#8a8a8a, #8a8a8a) 0 4px / 10px 2px no-repeat,
    linear-gradient(#8a8a8a, #8a8a8a) 4px 0 / 2px 10px no-repeat,
    repeating-linear-gradient(90deg, #999 0 1px, transparent 1px 2px) 12px 5px / 3px 1px no-repeat;
}
.tree svg { width: 20px; height: 20px; }

/* drawing area */
.work { flex: 1; display: flex; flex-direction: column; background: #fff; }
.canvas { flex: 1; position: relative; }
.scene { width: 1731px; height: 789px; }
.axis { font: 12px "Liberation Sans", sans-serif; letter-spacing: 0; }
.cube-t { font: bold 10px "Liberation Sans", sans-serif; fill: #a3a6aa; letter-spacing: 0; }
.win { position: absolute; right: 1px; top: 5px; width: 52px; height: 14px; }
.navbar { position: absolute; right: 0; top: 144px; width: 36px; height: 232px; background: #f3f3f3; border: 2px solid #c0c0c0; border-radius: 5px; }
.navbar svg { width: 34px; height: 231px; margin: -2px -1px; }

/* document tabs */
.docs {
  height: 30px; background: #d9d9d9; color: #666; padding-left: 7px; line-height: 31px; letter-spacing: -0.18px;
  display: grid; align-items: center;
  grid-template-columns: 23px 60px 245px 61px 76px 71px 121px 71px 144px 71px 129px 147px 138px 110px 76px 157px 18px;
}
.home { width: 19px; height: 19px; }
.doc { display: flex; justify-content: space-between; align-items: center; margin-right: 23px; height: 30px; }
.doc.wide { letter-spacing: -0.1px; }
.doc svg { width: 11px; height: 12px; color: #888; }
.doc.pre { margin-right: 12px; }
.doc.cur { margin-right: 10px; padding: 0 8px 0 10px; background: #eee; border-bottom: 4px solid #35a7df; color: #1590d8; line-height: 26px; }
.doc.last { margin-right: 68px; }
.lines { width: 18px; height: 18px; }

.status { flex: none; height: 30px; background: #eee; display: flex; align-items: center; padding: 3px 0 1px 1px; }
.status span { flex: 1; padding-top: 2px; }
.status b { font-weight: normal; width: 40px; height: 26px; border-left: 1px solid #ccc; padding-left: 10px; line-height: 22px; }
.status b:last-child { width: 39px; border-right: 1px solid #ccc; padding-left: 8px; }

/* taskbar */
.taskbar {
  flex: none; height: 50px; display: flex; color: #fff;
  background: linear-gradient(90deg, #33535a 0, #33535a 60px, #0c2c30 490px, #0a292c 925px, #315256 926px, #2f5055 1200px, #26474b 1250px, #0c2b2f 1310px, #0c2b2f 1660px, #0b3c48 1740px, #0b3c48 1860px, #0a3540 1920px);
}
.winkey { width: 60px; padding: 15px 20px; }
.winkey svg { width: 20px; height: 20px; }
.search { width: 430px; background: #345a5b; border: 1px solid #5d7b7c; display: flex; align-items: center; gap: 15px; padding-left: 14px; font-size: 17.800px; letter-spacing: -0.05px; color: #e4ebeb; }
.search svg { width: 20px; height: 20px; }
.app { width: 51px; margin-right: 11px; display: flex; align-items: center; justify-content: center; padding-right: 2px; border-bottom: 3px solid transparent; }
.app svg { width: 30px; height: 30px; }
.app.tv { width: 60px; margin: 0 9px 0 0; padding-right: 0; }
.app.tv svg { width: 20px; height: 20px; }
.app.run { border-bottom-color: #96e4ea; }
.app.sel { width: 61px; margin: 0 6px 0 -5px; background: #157f87; background-clip: padding-box; }
.inv { width: 24px; height: 29px; background: #dcaa08; box-shadow: -3px 2px 0 #ecc95d; display: flex; flex-direction: column; align-items: center; letter-spacing: 0; }
.inv b { font: bold 17px/20px "Liberation Serif", serif; }
.inv small { width: 24px; background: #6f5200; font: bold 7.500px/9px "Liberation Sans", sans-serif; text-align: center; }
.tray { margin-left: auto; display: grid; align-items: center; width: 318px; grid-template-columns: 33px 27px 33px 30px 45px 76px 23px 20px 24px 7px; }
.tray .clock { text-align: center; line-height: 23px; letter-spacing: -0.25px; }
.tray svg:nth-of-type(5) { grid-column: 8; }
.peek { width: 1px; height: 50px; background: #58777d; grid-column: 10; }
```
